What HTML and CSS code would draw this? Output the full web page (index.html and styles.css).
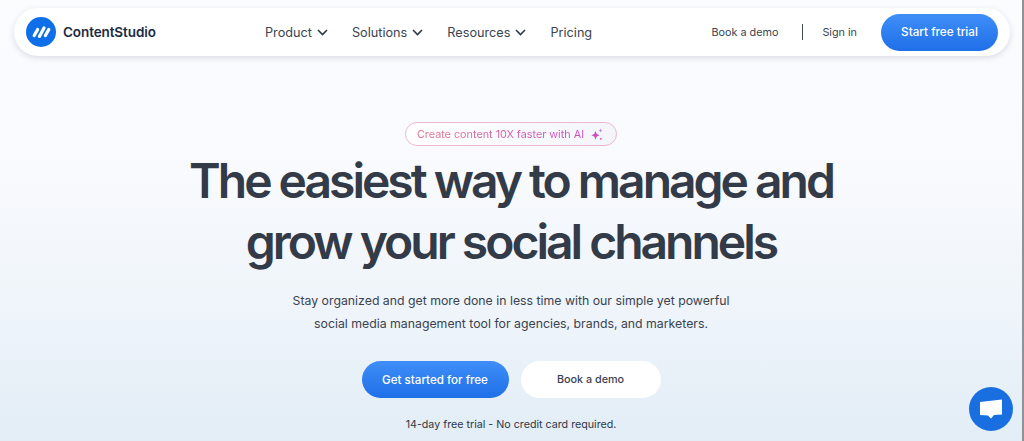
FILE: index.html
```html
<!DOCTYPE html>
<html lang="en">
<head>
    <meta charset="UTF-8">
    <title>ContentStudio</title>
    <link rel="stylesheet" href="styles.css">
</head>
<body>
    <div class="page">
        <header class="nav">
            <a class="brand" href="#">
                <svg class="brand-icon" width="30" height="30" viewBox="0 0 30 30">
                    <circle cx="15" cy="15" r="15" fill="#0f6fe8"/>
                    <path d="M8.2 18.6 11.6 12.4M13.4 19.4 18 11M19.4 18.6 22.8 12.4" stroke="#fff" stroke-width="3.2" stroke-linecap="round" fill="none"/>
                </svg>
                <span class="brand-name">ContentStudio</span>
            </a>
            <nav class="menu">
                <a href="#">Product<svg class="chev" width="11" height="7" viewBox="0 0 11 7"><path d="M1 1l4.5 4.5L10 1" fill="none" stroke="#2f3846" stroke-width="1.6"/></svg></a>
                <a href="#">Solutions<svg class="chev" width="11" height="7" viewBox="0 0 11 7"><path d="M1 1l4.5 4.5L10 1" fill="none" stroke="#2f3846" stroke-width="1.6"/></svg></a>
                <a href="#">Resources<svg class="chev" width="11" height="7" viewBox="0 0 11 7"><path d="M1 1l4.5 4.5L10 1" fill="none" stroke="#2f3846" stroke-width="1.6"/></svg></a>
                <a href="#">Pricing</a>
            </nav>
            <div class="actions">
                <a href="#">Book a demo</a>
                <span class="divider"></span>
                <a href="#">Sign in</a>
                <a class="btn btn-blue btn-nav" href="#">Start free trial</a>
            </div>
        </header>

        <main class="hero">
            <div class="pill">
                <span class="pill-text">Create content 10X faster with AI</span>
                <svg width="12" height="13" viewBox="0 0 12 13">
                    <path d="M4.5 3 5.8 6 8.6 7.2 5.8 8.4 4.5 11.4 3.2 8.4.4 7.2 3.2 6z" fill="#c94fc0"/>
                    <path d="M9.5.6 10.1 2 11.4 2.6 10.1 3.200 9.500 4.600 8.900 3.200 7.600 2.600 8.900 2z" fill="#b58ae0"/>
                    <circle cx="9.800" cy="10.800" r="1.100" fill="#d774c4"/>
                </svg>
            </div>
            <h1>The easiest way to manage and<br>grow your social channels</h1>
            <p class="lead">Stay organized and get more done in less time with our simple yet powerful<br>social media management tool for agencies, brands, and marketers.</p>
            <div class="cta">
                <a class="btn btn-blue btn-cta" href="#">Get started for free</a>
                <a class="btn btn-white btn-cta" href="#">Book a demo</a>
            </div>
            <p class="note">14-day free trial - No credit card required.</p>
        </main>

        <a class="chat" href="#">
            <svg width="24" height="22" viewBox="0 0 24 22"><path d="M1 4 23 1.500V16.500L15 17 12 20.500 9 17.500 1 17z" fill="#fff"/></svg>
        </a>
    </div>
</body>
</html>
```

FILE: styles.css
```css
* {
    box-sizing: border-box;
}
html, body {
    margin: 0;
    padding: 0;
    height: 100%;
}
body {
    font-family: Inter, "Liberation Sans", sans-serif;
    color: #3a4350;
    overflow: hidden;
}
a {
    color: inherit;
    text-decoration: none;
}
.page {
    position: relative;
    height: 441px;
    padding-top: 8px;
    border-right: 2px solid #8f9296;
    background: linear-gradient(180deg, #fbfcfe 0%, #f8fafd 40%, #eef4fa 72%, #e2edf6 100%);
}
.nav {
    display: flex;
    align-items: center;
    height: 48px;
    margin: 0 12px 0 14px;
    padding: 0 12px;
    background: #fff;
    border-radius: 24px;
    box-shadow: 0 2px 6px rgba(70, 80, 130, 0.18);
}
.brand {
    display: flex;
    align-items: center;
    gap: 7px;
    width: 239px;
}
.brand-name {
    font-size: 13.5px;
    font-weight: 600;
    letter-spacing: -0.1px;
    color: #1c2a44;
}
.menu {
    display: flex;
    align-items: center;
    gap: 24px;
    font-size: 12.7px;
}
.chev {
    margin-left: 5px;
    vertical-align: 1px;
}
.actions {
    display: flex;
    align-items: center;
    margin-left: auto;
    font-size: 10.8px;
}
.divider {
    width: 1px;
    height: 16px;
    margin: 0 19px 0 24px;
    background: #444c58;
}
.btn {
    display: flex;
    align-items: center;
    justify-content: center;
    border-radius: 19px;
    font-weight: 500;
}
.btn-blue {
    background: linear-gradient(180deg, #3f8ef8 0%, #1f6fe8 100%);
    color: #fff;
}
.btn-white {
    background: #fff;
    color: #3a4350;
}
.btn-nav {
    width: 117px;
    height: 37px;
    margin-left: 24px;
    font-size: 11.7px;
}
.hero {
    display: flex;
    flex-direction: column;
    align-items: center;
    padding-top: 66px;
}
.pill {
    display: flex;
    align-items: center;
    gap: 7px;
    height: 24px;
    padding: 0 13px 0 11px;
    border: 1px solid #e9b9d3;
    border-radius: 12px;
    background: linear-gradient(90deg, #fff 0%, #f3f5fb 100%);
    font-size: 10.8px;
}
.pill-text {
    background: linear-gradient(90deg, #e4738f, #c94fc0);
    -webkit-background-clip: text;
    background-clip: text;
    color: transparent;
}
h1 {
    margin: 0;
    padding-top: 4px;
    font-size: 48px;
    line-height: 61px;
    font-weight: 600;
    letter-spacing: -3px;
    text-align: center;
    color: #333a48;
}
.lead {
    margin: 17px 0 0;
    font-size: 12.3px;
    line-height: 23px;
    text-align: center;
    color: #3a4350;
}
.cta {
    display: flex;
    gap: 12px;
    margin-top: 26px;
}
.btn-cta {
    width: 147px;
    height: 37px;
    font-size: 11.6px;
}
.btn-white.btn-cta {
    width: 140px;
    font-size: 10.8px;
}
.note {
    margin: 20px 0 0;
    font-size: 10.7px;
    color: #2f3846;
}
.chat {
    position: absolute;
    right: 9px;
    bottom: 10px;
    display: flex;
    align-items: center;
    justify-content: center;
    width: 44px;
    height: 44px;
    border-radius: 50%;
    background: #1a6fe0;
}
```
